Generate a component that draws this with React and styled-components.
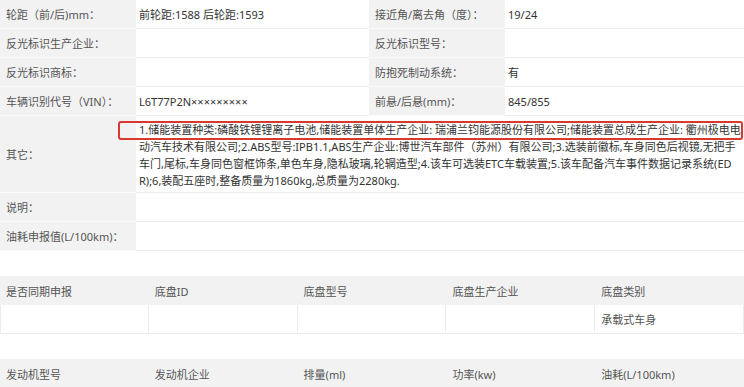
import React from 'react';
import styled, { createGlobalStyle } from 'styled-components';

const Global = createGlobalStyle`
  html, body { margin: 0; padding: 0; background: #fff; overflow: hidden; }
  body {
    font-family: "Noto Sans", "Noto Sans CJK SC", sans-serif;
    font-size: 11px;
    color: #333;
  }
`;

const Page = styled.div`
  width: 744px;
  display: flex;
  flex-direction: column;
`;

const InfoTable = styled.div`
  display: flex;
  flex-direction: column;
`;

const InfoRow = styled.div`
  position: relative;
  display: grid;
  grid-template-columns: ${(p) => (p.$wide ? '136px 1fr' : '136px 233px 136px 1fr')};
`;

const Label = styled.div`
  background: #f2f2f2;
  color: #555;
  padding: 0 6px;
  display: flex;
  align-items: center;
  min-height: 28px;
  border-bottom: 1px solid #fafafa;
  white-space: nowrap;
`;

const Value = styled.div`
  color: #333;
  padding: ${(p) => (p.$multi ? '5px 2px 3px 3px' : '0 4px 0 3px')};
  display: flex;
  align-items: center;
  min-height: 28px;
  border-bottom: 1px solid #ececec;
  line-height: 17px;
  word-break: break-all;
`;

const Highlight = styled.div`
  position: absolute;
  left: 118px;
  top: 5px;
  width: 625px;
  height: 19px;
  box-sizing: border-box;
  border: 2px solid #d8392c;
  border-radius: 3px;
  pointer-events: none;
`;

const GridTable = styled.div`
  margin-top: 25px;
  display: grid;
  grid-template-columns: repeat(5, 1fr);
`;

const HeadCell = styled.div`
  background: #f2f2f2;
  color: #555;
  height: 29px;
  padding: 0 6px;
  display: flex;
  align-items: center;
`;

const DataCell = styled.div`
  height: 28px;
  padding: 0 6px;
  display: flex;
  align-items: center;
  color: #555;
  border-bottom: 1px solid #ececec;
  border-right: 1px solid #ececec;
  border-left: ${(p) => (p.$first ? '1px solid #ececec' : 'none')};
`;

const topRows = [
  ['轮距（前/后)mm：', '前轮距:1588 后轮距:1593', '接近角/离去角（度）：', '19/24'],
  ['反光标识生产企业：', '', '反光标识型号：', ''],
  ['反光标识商标：', '', '防抱死制动系统：', '有'],
  ['车辆识别代号（VIN）：', 'L6T77P2N×××××××××', '前悬/后悬(mm)：', '845/855'],
];

const otherText =
  '1.储能装置种类:磷酸铁锂锂离子电池,储能装置单体生产企业: 瑞浦兰钧能源股份有限公司;储能装置总成生产企业: 衢州极电电动汽车技术有限公司;2.ABS型号:IPB1.1,ABS生产企业:博世汽车部件（苏州）有限公司;3.选装前徽标,车身同色后视镜,无把手车门,尾标,车身同色窗框饰条,单色车身,隐私玻璃,轮辋造型;4.该车可选装ETC车载装置;5.该车配备汽车事件数据记录系统(EDR);6,装配五座时,整备质量为1860kg,总质量为2280kg.';

const chassisHead = ['是否同期申报', '底盘ID', '底盘型号', '底盘生产企业', '底盘类别'];
const chassisData = ['', '', '', '', '承载式车身'];
const engineHead = ['发动机型号', '发动机企业', '排量(ml)', '功率(kw)', '油耗(L/100km)'];
const engineData = ['', '', '', '', ''];

export default function App() {
  return (
    <Page>
      <Global />
      <InfoTable>
        {topRows.map((r, i) => (
          <InfoRow key={i}>
            <Label>{r[0]}</Label>
            <Value>{r[1]}</Value>
            <Label>{r[2]}</Label>
            <Value>{r[3]}</Value>
          </InfoRow>
        ))}
        <InfoRow $wide>
          <Label>其它：</Label>
          <Value $multi>{otherText}</Value>
          <Highlight />
        </InfoRow>
        <InfoRow $wide>
          <Label>说明：</Label>
          <Value />
        </InfoRow>
        <InfoRow $wide>
          <Label>油耗申报值(L/100km)：</Label>
          <Value />
        </InfoRow>
      </InfoTable>

      <GridTable>
        {chassisHead.map((h) => (
          <HeadCell key={h}>{h}</HeadCell>
        ))}
        {chassisData.map((d, i) => (
          <DataCell key={i} $first={i === 0}>{d}</DataCell>
        ))}
      </GridTable>

      <GridTable>
        {engineHead.map((h) => (
          <HeadCell key={h}>{h}</HeadCell>
        ))}
        {engineData.map((d, i) => (
          <DataCell key={i} $first={i === 0}>{d}</DataCell>
        ))}
      </GridTable>
    </Page>
  );
}
